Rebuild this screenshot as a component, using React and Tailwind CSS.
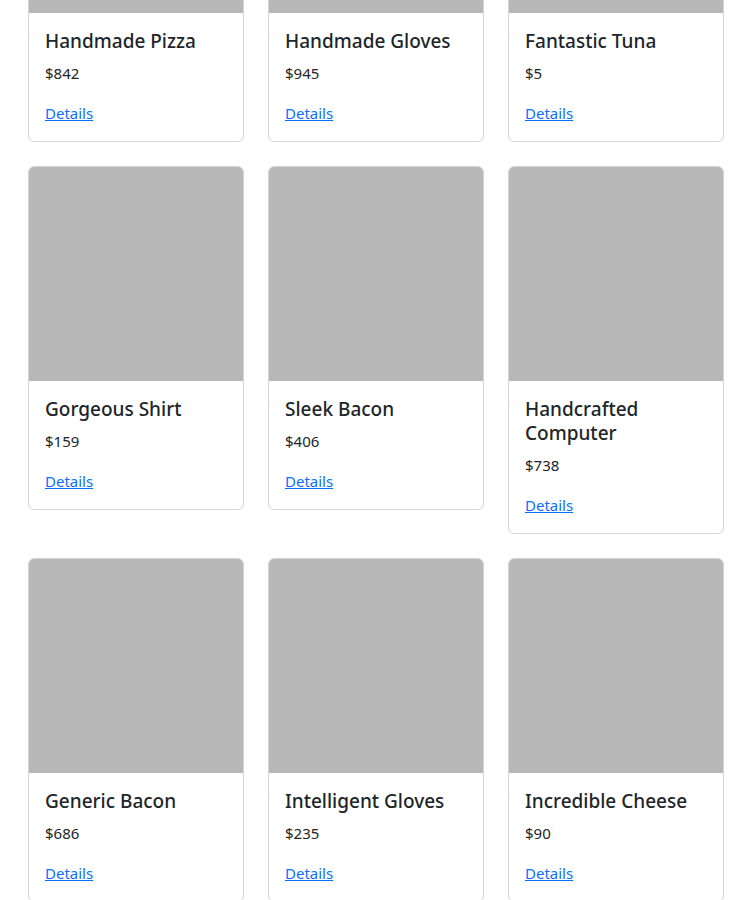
import React from "react";

const products = [
  { name: "Handmade Pizza", price: 842 },
  { name: "Handmade Gloves", price: 945 },
  { name: "Fantastic Tuna", price: 5 },
  { name: "Gorgeous Shirt", price: 159 },
  { name: "Sleek Bacon", price: 406 },
  { name: "Handcrafted Computer", price: 738 },
  { name: "Generic Bacon", price: 686 },
  { name: "Intelligent Gloves", price: 235 },
  { name: "Incredible Cheese", price: 90 },
];

function Card({ name, price }) {
  return (
    <div className="flex flex-col rounded-[6px] border border-[#d5d5d5] bg-white overflow-hidden">
      <div className="h-[214px] bg-[#b8b8b8]" />
      <div className="p-4">
        <h5 className="mb-2 text-[19px] leading-[24px] font-medium text-[#212529]">{name}</h5>
        <p className="mb-4 text-[15px] leading-[24px] text-[#212529]">${price}</p>
        <a href="#" className="text-[15px] leading-[24px] text-[#0d6efd] underline">Details</a>
      </div>
    </div>
  );
}

export default function App() {
  return (
    <div className="min-h-[900px] bg-white overflow-hidden" style={{ fontFamily: '"Noto Sans", "Open Sans", sans-serif' }}>
      <div className="mt-[-202px] px-[28px] grid grid-cols-[216px_216px_216px] gap-6 items-start">
        {products.map((p) => (
          <Card key={p.name} {...p} />
        ))}
      </div>
    </div>
  );
}
